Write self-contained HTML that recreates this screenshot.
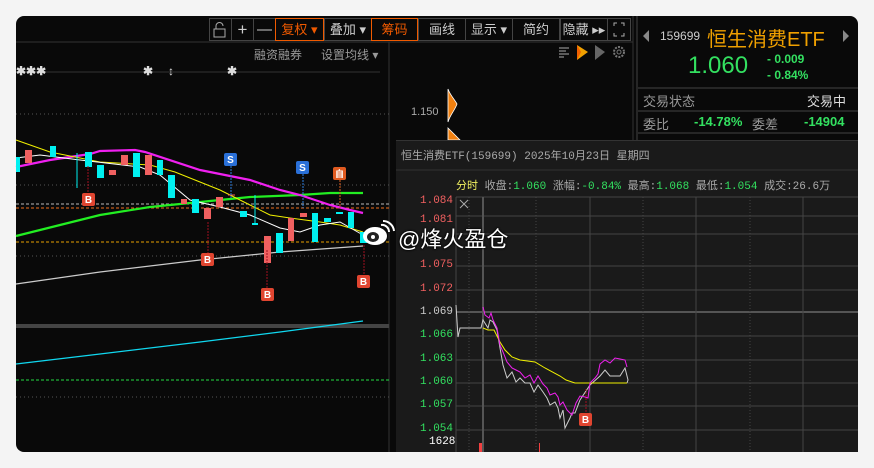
<!DOCTYPE html>
<html><head><meta charset="utf-8"><style>
*{margin:0;padding:0;box-sizing:border-box}
body{width:874px;height:468px;background:#f4f4f4;position:relative;overflow:hidden;font-family:"Liberation Sans","Noto Sans CJK SC",sans-serif}
.panel{position:absolute;left:16px;top:16px;width:842px;height:436px;background:#090909;border-radius:8px;overflow:hidden}
.a{position:absolute;white-space:nowrap}
.tb{position:absolute;top:18px;height:23px;border:1px solid #444;color:#ccc;font-size:13px;line-height:21px;text-align:center}
.or{border-color:#f05a00;color:#f05a00}
.pop{position:absolute;left:396px;top:140px;width:462px;height:312px;background:#1a1a1a;border-top:1px solid #333}
</style></head><body>
<div class="panel"></div>
<svg class="a" style="left:0;top:0" width="874" height="468">
<line x1="16" y1="42" x2="633" y2="42" stroke="#333"/>
<line x1="637" y1="16" x2="637" y2="140" stroke="#444"/>
<line x1="633" y1="16" x2="633" y2="140" stroke="#333"/>
<line x1="389" y1="42" x2="389" y2="452" stroke="#333"/>
<line x1="16" y1="72" x2="380" y2="72" stroke="#333"/>
<line x1="16" y1="114" x2="390" y2="114" stroke="#555" stroke-dasharray="1 3"/>
<line x1="16" y1="185" x2="390" y2="185" stroke="#555" stroke-dasharray="1 3"/>
<line x1="16" y1="256" x2="390" y2="256" stroke="#555" stroke-dasharray="1 3"/>
<line x1="16" y1="204" x2="390" y2="204" stroke="#bbb" stroke-dasharray="3 2"/>
<line x1="16" y1="208" x2="390" y2="208" stroke="#f07020" stroke-dasharray="3 2"/>
<line x1="16" y1="242" x2="390" y2="242" stroke="#e8a000" stroke-dasharray="3 2"/>
<rect x="16" y="324" width="373" height="4" fill="#444"/>
<line x1="16" y1="380" x2="389" y2="380" stroke="#22dd44" stroke-dasharray="3 2"/>
<line x1="16" y1="397" x2="389" y2="397" stroke="#555" stroke-dasharray="1 3"/>
<polyline points="16,364 100,354 200,342 280,332 363,321" stroke="#10d8f0" fill="none" stroke-width="1.3"/>
<polyline points="16,284 100,272 200,260 280,252 363,246" stroke="#ccc" fill="none" stroke-width="1.2"/>
<polyline points="16,236 60,225 100,215 150,207 200,202 250,197 300,195 330,193 363,193" stroke="#22ee22" fill="none" stroke-width="2.2"/>
<polyline points="16,167 50,160 90,154 100,151 135,150 145,152 200,170 250,180 280,190 300,195 330,205 350,210 363,213" stroke="#f020f0" fill="none" stroke-width="2.2"/>
<polyline points="16,140 50,152 100,162 150,165 175,172 220,190 250,205 270,215 290,218 320,222 340,225 363,232" stroke="#f0f000" fill="none" stroke-width="1"/>
<polyline points="16,158 40,155 80,160 140,167 160,175 190,200 220,207 250,215 280,228 300,232 320,225 340,222 363,235" stroke="#fff" fill="none" stroke-width="1"/>
<g stroke-width="1">
<rect x="16" y="157" width="4" height="15" fill="#00f0f0"/>
<rect x="25" y="150" width="7" height="13" fill="#f06060"/>
<rect x="50" y="146" width="6" height="11" fill="#00f0f0"/>
<line x1="77" y1="153" x2="77" y2="188" stroke="#00f0f0"/>
<rect x="85" y="152" width="7" height="15" fill="#00f0f0"/>
<rect x="97" y="165" width="7" height="13" fill="#00f0f0"/>
<rect x="109" y="170" width="7" height="5" fill="#f06060"/>
<rect x="121" y="155" width="7" height="10" fill="#f06060"/>
<rect x="133" y="153" width="7" height="24" fill="#00f0f0"/>
<rect x="145" y="155" width="7" height="20" fill="#f06060"/>
<rect x="157" y="160" width="6" height="15" fill="#00f0f0"/>
<rect x="168" y="175" width="7" height="23" fill="#00f0f0"/>
<rect x="181" y="199" width="6" height="5" fill="#f06060"/>
<rect x="192" y="199" width="7" height="14" fill="#00f0f0"/>
<rect x="204" y="208" width="7" height="11" fill="#f06060"/>
<rect x="216" y="197" width="7" height="10" fill="#f06060"/>
<line x1="228" y1="195" x2="235" y2="195" stroke="#f06060"/>
<rect x="240" y="211" width="7" height="6" fill="#00f0f0"/>
<line x1="255" y1="195" x2="255" y2="225" stroke="#00f0f0"/><line x1="252" y1="224" x2="258" y2="224" stroke="#00f0f0" stroke-width="2"/>
<rect x="264" y="236" width="7" height="27" fill="#f06060"/>
<rect x="276" y="233" width="7" height="20" fill="#00f0f0"/>
<rect x="288" y="218" width="6" height="23" fill="#f06060"/>
<rect x="300" y="213" width="7" height="4" fill="#f06060"/>
<rect x="312" y="213" width="6" height="29" fill="#00f0f0"/>
<rect x="324" y="218" width="7" height="4" fill="#00f0f0"/>
<line x1="336" y1="213" x2="343" y2="213" stroke="#00f0f0" stroke-width="2"/>
<rect x="348" y="212" width="6" height="16" fill="#00f0f0"/>
<rect x="360" y="232" width="7" height="11" fill="#00f0f0"/>
</g>
<g font-size="10" font-weight="bold" text-anchor="middle" fill="#fff">
<line x1="88" y1="166" x2="88" y2="194" stroke="#a01020" stroke-dasharray="2 1"/>
<rect x="82" y="193" width="13" height="13" rx="2" fill="#e04530"/><text x="88.5" y="203">B</text>
<line x1="208" y1="222" x2="208" y2="253" stroke="#a01020" stroke-dasharray="2 1"/>
<rect x="201" y="253" width="13" height="13" rx="2" fill="#e04530"/><text x="207.5" y="263">B</text>
<line x1="267" y1="250" x2="267" y2="288" stroke="#a01020" stroke-dasharray="2 1"/>
<rect x="261" y="288" width="13" height="13" rx="2" fill="#e04530"/><text x="267.5" y="298">B</text>
<line x1="364" y1="245" x2="364" y2="275" stroke="#a01020" stroke-dasharray="2 1"/>
<rect x="357" y="275" width="13" height="13" rx="2" fill="#e04530"/><text x="363.5" y="285">B</text>
<line x1="231" y1="166" x2="231" y2="199" stroke="#3080e0" stroke-dasharray="2 1"/>
<rect x="224" y="153" width="13" height="13" rx="2" fill="#2a70d8"/><text x="230.5" y="163">S</text>
<line x1="303" y1="174" x2="303" y2="208" stroke="#3080e0" stroke-dasharray="2 1"/>
<rect x="296" y="161" width="13" height="13" rx="2" fill="#2a70d8"/><text x="302.5" y="171">S</text>
<line x1="340" y1="180" x2="340" y2="208" stroke="#e06020" stroke-dasharray="2 1"/>
<rect x="333" y="167" width="13" height="13" rx="2" fill="#e05a20"/><text x="339.5" y="177" font-size="9">自</text>
</g>
<path d="M448,89 C450,95 455,100 457,104 C455,110 450,115 448,122 Z" fill="#f08010" stroke="#fff" stroke-width="0.8"/>
<path d="M448,128 C452,132 456,136 460,140 L448,140Z" fill="#f08010" stroke="#fff" stroke-width="0.8"/>
<line x1="638" y1="88" x2="858" y2="88" stroke="#444"/>
<line x1="638" y1="111" x2="858" y2="111" stroke="#444"/>
<line x1="638" y1="133" x2="858" y2="133" stroke="#444"/>
<g stroke="#aaa" stroke-width="1"><line x1="559" y1="48" x2="569" y2="48"/><line x1="559" y1="51" x2="566" y2="51"/><line x1="559" y1="54" x2="569" y2="54"/><line x1="559" y1="57" x2="564" y2="57"/></g>
<path d="M577,45 L588,52 L577,60Z" fill="#f0a000"/><path d="M577,45 L581,52 L577,60Z" fill="#f06000"/>
<path d="M595,45 L605,52 L595,60Z" fill="#666"/>
<circle cx="619" cy="52" r="5" fill="none" stroke="#777" stroke-width="2" stroke-dasharray="2 1.2"/><circle cx="619" cy="52" r="2" fill="none" stroke="#777"/>
<path d="M649,30 L643,36 L649,42Z M843,30 L849,36 L843,42Z" fill="#888"/>
<rect x="214" y="29" width="11" height="8" fill="none" stroke="#aaa"/><path d="M216,29 v-3 a3.5,3.5 0 0 1 7,0" fill="none" stroke="#aaa"/>
<path d="M617,23 l-3,0 0,3 M621,23 l3,0 0,3 M617,36 l-3,0 0,-3 M621,36 l3,0 0,-3" fill="none" stroke="#aaa"/>
</svg>
<div class="tb" style="left:209px;width:23px"></div>
<div class="tb" style="left:231px;width:23px;font-size:17px">+</div>
<div class="tb" style="left:253px;width:23px;font-size:15px">—</div>
<div class="tb or" style="left:275px;width:49px">复权 ▾</div>
<div class="tb" style="left:324px;width:48px">叠加 ▾</div>
<div class="tb or" style="left:371px;width:47px">筹码</div>
<div class="tb" style="left:418px;width:48px">画线</div>
<div class="tb" style="left:465px;width:48px">显示 ▾</div>
<div class="tb" style="left:512px;width:48px">简约</div>
<div class="tb" style="left:560px;width:48px">隐藏 ▸▸</div>
<div class="tb" style="left:607px;width:24px"></div>
<div class="a" style="left:254px;top:46px;font-size:12px;color:#999">融资融券</div>
<div class="a" style="left:321px;top:46px;font-size:12px;color:#999">设置均线 ▾</div>
<div class="a" style="left:16px;top:64px;font-size:12px;color:#ddd;font-weight:bold">✱✱✱</div>
<div class="a" style="left:143px;top:64px;font-size:12px;color:#ddd;font-weight:bold">✱</div>
<div class="a" style="left:168px;top:64px;font-size:12px;color:#ddd;font-weight:bold">↕</div>
<div class="a" style="left:227px;top:64px;font-size:12px;color:#ddd;font-weight:bold">✱</div>
<div class="a" style="left:411px;top:106px;font-size:11px;color:#aaa">1.150</div>
<div class="a" style="left:660px;top:29px;font-size:12px;color:#ccc">159699</div>
<div class="a" style="left:707px;top:23px;font-size:20px;color:#f0a000">恒生消费ETF</div>
<div class="a" style="left:688px;top:52px;font-size:24px;color:#33e060">1.060</div>
<div class="a" style="left:767px;top:52px;font-size:12px;color:#33e060;font-weight:bold">- 0.009</div>
<div class="a" style="left:767px;top:68px;font-size:12px;color:#33e060;font-weight:bold">- 0.84%</div>
<div class="a" style="left:643px;top:91px;font-size:13px;color:#999">交易状态</div>
<div class="a" style="left:807px;top:91px;font-size:13px;color:#ddd">交易中</div>
<div class="a" style="left:643px;top:114px;font-size:13px;color:#999">委比</div>
<div class="a" style="left:694px;top:114px;font-size:13px;color:#33e060;font-weight:bold">-14.78%</div>
<div class="a" style="left:752px;top:114px;font-size:13px;color:#999">委差</div>
<div class="a" style="left:804px;top:114px;font-size:13px;color:#33e060;font-weight:bold">-14904</div>
<div class="pop"></div>
<svg class="a" style="left:0;top:0" width="874" height="468">
<line x1="396" y1="170" x2="858" y2="170" stroke="#333"/>
<g stroke="#444" stroke-width="1">
<line x1="456" y1="197" x2="858" y2="197"/><line x1="456" y1="216" x2="858" y2="216"/><line x1="456" y1="234" x2="858" y2="234"/>
<line x1="456" y1="266" x2="858" y2="266"/><line x1="456" y1="290" x2="858" y2="290"/>
<line x1="456" y1="312" x2="858" y2="312" stroke="#555" stroke-width="2"/>
<line x1="456" y1="336" x2="858" y2="336"/><line x1="456" y1="360" x2="858" y2="360"/><line x1="456" y1="383" x2="858" y2="383"/>
<line x1="456" y1="406" x2="858" y2="406"/><line x1="456" y1="430" x2="858" y2="430"/>
<line x1="456" y1="197" x2="456" y2="452"/><line x1="483" y1="197" x2="483" y2="452" stroke="#555" stroke-width="2"/>
<line x1="590" y1="197" x2="590" y2="452"/><line x1="696" y1="197" x2="696" y2="452"/><line x1="803" y1="197" x2="803" y2="452"/>
</g>
<g stroke="#444" stroke-dasharray="1 2"><line x1="469" y1="197" x2="469" y2="452"/><line x1="536" y1="197" x2="536" y2="452"/><line x1="643" y1="197" x2="643" y2="452"/><line x1="750" y1="197" x2="750" y2="452"/></g>
<path d="M460,200 l8,8 M468,200 l-8,8" stroke="#aaa"/>
<polyline points="456,305 458,337 460,328 481,328 483,320 488,328 490,320 493,322 497,330 500,348 503,365 507,378 512,372 516,382 520,378 525,383 530,383 534,392 538,385 543,392 547,398 550,405 555,402 558,408 560,418 563,410 565,428 570,418 572,413 575,413 580,400 590,385 600,376 605,370 610,376 620,376 625,368 628,380 627,383" stroke="#ccc" fill="none"/>
<polyline points="483,328 488,330 494,330 500,342 505,350 512,357 520,360 535,362 545,368 560,376 566,380 575,383 627,383" stroke="#f0f000" fill="none"/>
<polyline points="483,307 485,315 489,318 491,313 493,320 497,328 500,345 503,352 507,362 512,368 516,370 520,372 525,378 530,375 534,383 538,376 543,384 547,388 550,395 555,393 558,397 560,405 563,402 567,410 570,413 572,415 576,403 580,396 585,397 588,398 590,383 595,378 598,374 600,364 605,360 610,363 615,358 620,359 625,360 627,367" stroke="#f020f0" fill="none"/>
<line x1="586" y1="389" x2="586" y2="413" stroke="#a01020" stroke-dasharray="2 1"/>
<rect x="579" y="413" width="13" height="13" rx="2" fill="#e04530"/><text x="585.5" y="423" font-size="10" font-weight="bold" fill="#fff" text-anchor="middle">B</text>
<rect x="479" y="443" width="3" height="9" fill="#f04040"/><rect x="539" y="443" width="1" height="9" fill="#f04040"/>
<ellipse cx="375" cy="236" rx="12" ry="9" fill="#fff"/><ellipse cx="373" cy="237" rx="6" ry="5" fill="#222"/><circle cx="373" cy="237" r="2" fill="#fff"/>
<path d="M381,225 a7,7 0 0 1 8,7 M383,221 a11,11 0 0 1 11,10" stroke="#fff" stroke-width="2" fill="none"/>
</svg>
<div class="a" style="left:401px;top:147px;font-size:11px;color:#aaa;font-family:'Liberation Mono','Noto Sans CJK SC',monospace">恒生消费ETF(159699) 2025年10月23日 星期四</div>
<div class="a" style="left:456px;top:177px;font-size:11px;color:#aaa;font-family:'Liberation Mono','Noto Sans CJK SC',monospace"><span style="color:#f0f060">分时</span> 收盘:<span style="color:#33e060">1.060</span> 涨幅:<span style="color:#33e060">-0.84%</span> 最高:<span style="color:#33e060">1.068</span> 最低:<span style="color:#33e060">1.054</span> 成交:26.6万</div>
<div class="a" style="left:420px;top:195px;font-size:11px;line-height:12px;color:#f06060;font-family:'Liberation Mono',monospace">1.084</div>
<div class="a" style="left:420px;top:214px;font-size:11px;color:#f06060;font-family:'Liberation Mono',monospace">1.081</div>
<div class="a" style="left:420px;top:259px;font-size:11px;color:#f06060;font-family:'Liberation Mono',monospace">1.075</div>
<div class="a" style="left:420px;top:283px;font-size:11px;color:#f06060;font-family:'Liberation Mono',monospace">1.072</div>
<div class="a" style="left:420px;top:306px;font-size:11px;color:#ccc;font-family:'Liberation Mono',monospace">1.069</div>
<div class="a" style="left:420px;top:329px;font-size:11px;color:#33e060;font-family:'Liberation Mono',monospace">1.066</div>
<div class="a" style="left:420px;top:353px;font-size:11px;color:#33e060;font-family:'Liberation Mono',monospace">1.063</div>
<div class="a" style="left:420px;top:376px;font-size:11px;color:#33e060;font-family:'Liberation Mono',monospace">1.060</div>
<div class="a" style="left:420px;top:399px;font-size:11px;color:#33e060;font-family:'Liberation Mono',monospace">1.057</div>
<div class="a" style="left:420px;top:423px;font-size:11px;color:#33e060;font-family:'Liberation Mono',monospace">1.054</div>
<div class="a" style="left:429px;top:436px;font-size:11px;color:#fff;font-family:'Liberation Mono',monospace">1628</div>
<div class="a" style="left:398px;top:222px;font-size:22px;color:#fff;text-shadow:0 0 2px #000,0 0 2px #000">@烽火盈仓</div>
</body></html>
